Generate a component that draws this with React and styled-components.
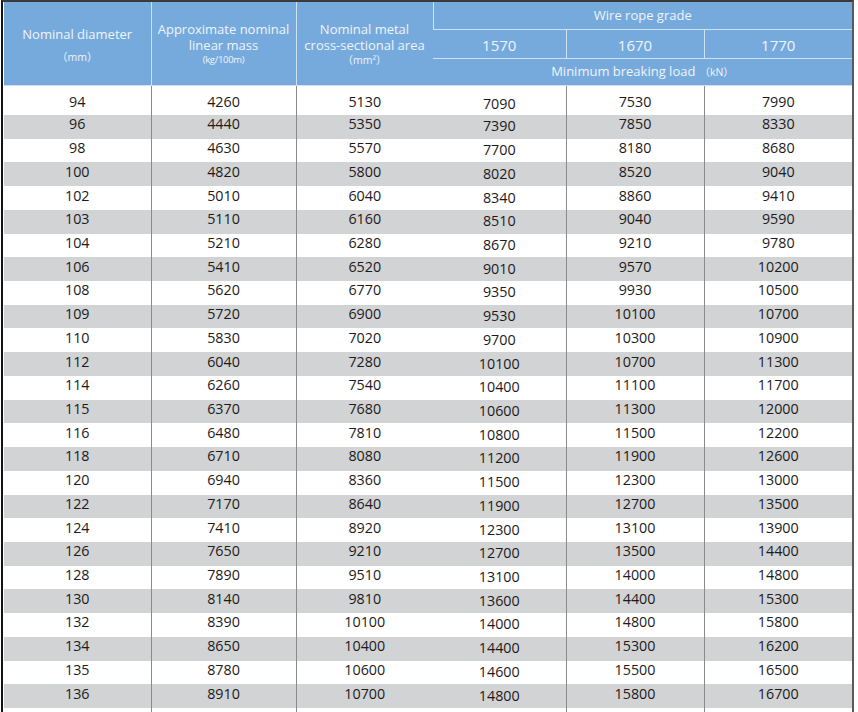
import React from 'react';
import styled, { createGlobalStyle } from 'styled-components';

const rows = [
  [94, 4260, 5130, 7090, 7530, 7990],
  [96, 4440, 5350, 7390, 7850, 8330],
  [98, 4630, 5570, 7700, 8180, 8680],
  [100, 4820, 5800, 8020, 8520, 9040],
  [102, 5010, 6040, 8340, 8860, 9410],
  [103, 5110, 6160, 8510, 9040, 9590],
  [104, 5210, 6280, 8670, 9210, 9780],
  [106, 5410, 6520, 9010, 9570, 10200],
  [108, 5620, 6770, 9350, 9930, 10500],
  [109, 5720, 6900, 9530, 10100, 10700],
  [110, 5830, 7020, 9700, 10300, 10900],
  [112, 6040, 7280, 10100, 10700, 11300],
  [114, 6260, 7540, 10400, 11100, 11700],
  [115, 6370, 7680, 10600, 11300, 12000],
  [116, 6480, 7810, 10800, 11500, 12200],
  [118, 6710, 8080, 11200, 11900, 12600],
  [120, 6940, 8360, 11500, 12300, 13000],
  [122, 7170, 8640, 11900, 12700, 13500],
  [124, 7410, 8920, 12300, 13100, 13900],
  [126, 7650, 9210, 12700, 13500, 14400],
  [128, 7890, 9510, 13100, 14000, 14800],
  [130, 8140, 9810, 13600, 14400, 15300],
  [132, 8390, 10100, 14000, 14800, 15800],
  [134, 8650, 10400, 14400, 15300, 16200],
  [135, 8780, 10600, 14600, 15500, 16500],
  [136, 8910, 10700, 14800, 15800, 16700],
];

const widths = [147, 145, 137, 133, 138, 148];

export default function App() {
  return (
    <>
      <GlobalStyle />
      <Frame>
        <Table>
          <colgroup>
            {widths.map((w, i) => (
              <col key={i} style={{ width: w }} />
            ))}
          </colgroup>
          <thead>
            <HeadRow $h={27}>
              <HeadCell rowSpan={3} $pt={3}>
                <Title>Nominal diameter</Title>
                <Unit $gap={8}>（mm）</Unit>
              </HeadCell>
              <HeadCell rowSpan={3} $pt={1}>
                <Title>Approximate nominal</Title>
                <Title>linear mass</Title>
                <SmallUnit>(kg/100m)</SmallUnit>
              </HeadCell>
              <HeadCell rowSpan={3} $pt={2}>
                <Title>Nominal metal</Title>
                <Title>cross-sectional area</Title>
                <Unit>（mm²）</Unit>
              </HeadCell>
              <HeadCell colSpan={3}>Wire rope grade</HeadCell>
            </HeadRow>
            <HeadRow $h={29}>
              <GradeCell>1570</GradeCell>
              <GradeCell>1670</GradeCell>
              <GradeCell>1770</GradeCell>
            </HeadRow>
            <HeadRow $h={27}>
              <HeadCell colSpan={3}>
                Minimum breaking load<KN>（kN）</KN>
              </HeadCell>
            </HeadRow>
          </thead>
          <tbody>
            {rows.map((r, i) => (
              <BodyRow key={r[0]} $alt={i % 2 === 1} $first={i === 0}>
                {r.map((v, j) => (
                  <Cell key={j} $col={j} $first={i === 0}>
                    {v}
                  </Cell>
                ))}
              </BodyRow>
            ))}
            <BodyRow $alt={false}>
              {widths.map((_, j) => (
                <Cell key={j} $col={j} />
              ))}
            </BodyRow>
          </tbody>
        </Table>
      </Frame>
    </>
  );
}

//styled-components
const GlobalStyle = createGlobalStyle`
  html, body {
    margin: 0;
    padding: 0;
    background: #fff;
    overflow: hidden;
  }
`;

const Frame = styled.div`
  width: 848px;
  margin-left: 1px;
  border-left: 2px solid #141414;
  border-top: 2px solid #3a3a3a;
  border-right: 2px solid #5a5a5a;
  padding-left: 1px;
  font-family: 'Open Sans', 'Noto Sans CJK SC', sans-serif;
`;

const Table = styled.table`
  width: 848px;
  table-layout: fixed;
  border-collapse: collapse;
  border-spacing: 0;
`;

const HeadRow = styled.tr`
  height: ${({ $h }) => $h}px;
  background: #77aadc;
`;

const HeadCell = styled.th`
  padding: ${({ $pt }) => $pt || 0}px 0 0;
  font-weight: 400;
  font-size: 13px;
  line-height: 16px;
  color: #eef4fb;
  text-align: center;
  vertical-align: middle;
  white-space: nowrap;
  border-left: 1px solid #cfe2f4;
  border-bottom: 1px solid #cfe2f4;
  &:first-child {
    border-left: none;
  }
`;

const GradeCell = styled(HeadCell)`
  font-size: 15px;
  padding-top: 3px;
`;

const Title = styled.div`
  font-size: 13px;
  line-height: 16px;
`;

const Unit = styled.div`
  font-size: 10.5px;
  line-height: 14px;
  margin-top: ${({ $gap }) => $gap || 0}px;
`;

const SmallUnit = styled.div`
  font-size: 9.5px;
  line-height: 14px;
  letter-spacing: -0.3px;
`;

const KN = styled.span`
  font-size: 10.5px;
  margin-left: 4px;
`;

const BodyRow = styled.tr`
  height: ${({ $first }) => ($first ? '30px' : '23.73px')};
  background: ${({ $alt }) => ($alt ? '#d1d3d4' : '#ffffff')};
`;

const Cell = styled.td`
  padding: ${({ $first, $col }) =>
    $first ? ($col === 3 ? '9px 0 1px' : '7px 0 3px') : $col === 3 ? '0 0 1px' : '0 0 5px'};
  font-size: 14.3px;
  line-height: 16px;
  color: #1e1a1b;
  text-align: center;
  vertical-align: middle;
  border-left: ${({ $col }) => ($col === 0 || $col === 3 ? 'none' : '1px solid #8b8b8b')};
`;
